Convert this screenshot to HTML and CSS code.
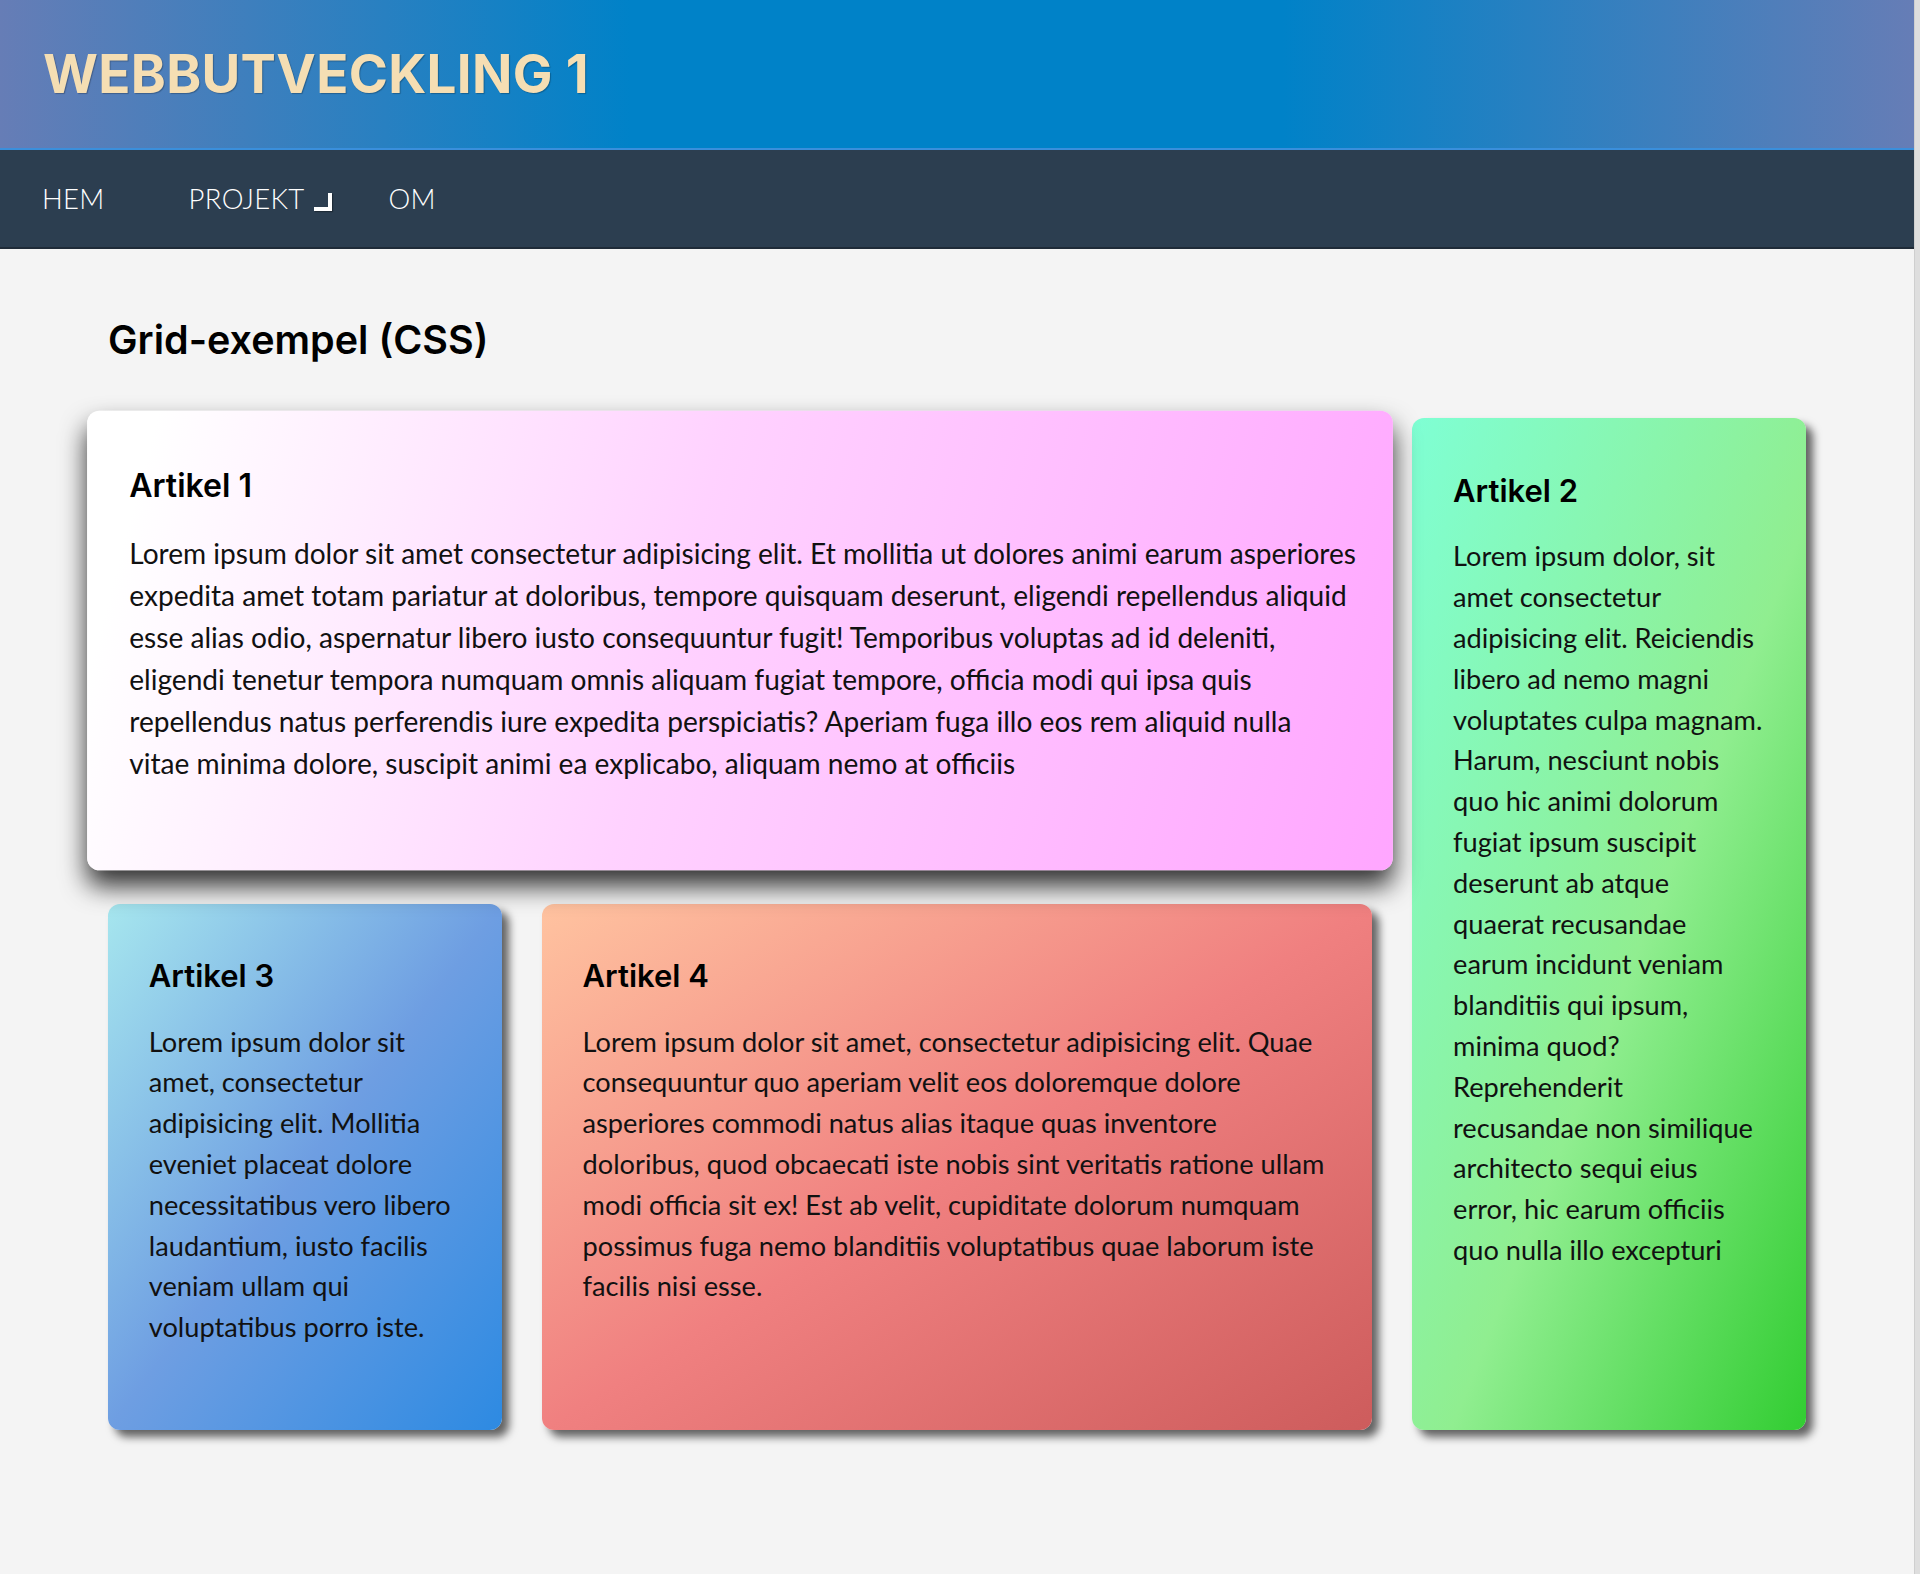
FILE: index.html
```html
<!DOCTYPE html>
<html lang="sv">
<head>
<meta charset="utf-8">
<title>Webbutveckling 1 – Grid-exempel</title>
<link rel="stylesheet" href="styles.css">
</head>
<body>
<div class="page">
  <header class="site-header">
    <h1 class="site-title">WEBBUTVECKLING 1</h1>
  </header>
  <nav class="site-nav">
    <ul class="nav-list">
      <li class="nav-item"><a class="nav-link" href="#">HEM</a></li>
      <li class="nav-item"><a class="nav-link nav-link--sub" href="#">PROJEKT</a></li>
      <li class="nav-item"><a class="nav-link" href="#">OM</a></li>
    </ul>
  </nav>
  <main class="content">
    <h2 class="page-title">Grid-exempel (CSS)</h2>
    <div class="grid">
      <article class="card card-1 card--lifted">
        <h3 class="card-title">Artikel 1</h3>
        <p class="card-text">Lorem ipsum dolor sit amet consectetur adipisicing elit. Et mollitia ut dolores animi earum asperiores expedita amet totam pariatur at doloribus, tempore quisquam deserunt, eligendi repellendus aliquid esse alias odio, aspernatur libero iusto consequuntur fugit! Temporibus voluptas ad id deleniti, eligendi tenetur tempora numquam omnis aliquam fugiat tempore, officia modi qui ipsa quis repellendus natus perferendis iure expedita perspiciatis? Aperiam fuga illo eos rem aliquid nulla vitae minima dolore, suscipit animi ea explicabo, aliquam nemo at officiis</p>
      </article>
      <article class="card card-2">
        <h3 class="card-title">Artikel 2</h3>
        <p class="card-text">Lorem ipsum dolor, sit amet consectetur adipisicing elit. Reiciendis libero ad nemo magni voluptates culpa magnam. Harum, nesciunt nobis quo hic animi dolorum fugiat ipsum suscipit deserunt ab atque quaerat recusandae earum incidunt veniam blanditiis qui ipsum, minima quod? Reprehenderit recusandae non similique architecto sequi eius error, hic earum officiis quo nulla illo excepturi</p>
      </article>
      <article class="card card-3">
        <h3 class="card-title">Artikel 3</h3>
        <p class="card-text">Lorem ipsum dolor sit amet, consectetur adipisicing elit. Mollitia eveniet placeat dolore necessitatibus vero libero laudantium, iusto facilis veniam ullam qui voluptatibus porro iste.</p>
      </article>
      <article class="card card-4">
        <h3 class="card-title">Artikel 4</h3>
        <p class="card-text">Lorem ipsum dolor sit amet, consectetur adipisicing elit. Quae consequuntur quo aperiam velit eos doloremque dolore asperiores commodi natus alias itaque quas inventore doloribus, quod obcaecati iste nobis sint veritatis ratione ullam modi officia sit ex! Est ab velit, cupiditate dolorum numquam possimus fuga nemo blanditiis voluptatibus quae laborum iste facilis nisi esse.</p>
      </article>
    </div>
  </main>
</div>
</body>
</html>
```

FILE: styles.css
```css
html {
  background: #dedede;
}

body {
  margin: 0;
  font-family: "Lato", "Open Sans", sans-serif;
  color: #111;
}

.page {
  margin-right: 5px;
  min-height: 100vh;
  background: #f4f4f4;
  border-right: 1px solid #cfcfcf;
}

.site-header {
  height: 148px;
  display: flex;
  align-items: center;
  padding: 0 43px;
  background: linear-gradient(to right, #667db6, #0082c8 33%, #0082c8 67%, #667db6);
  border-bottom: 2px solid #3a8fdc;
}

.site-title {
  margin: 0;
  font-family: "Inter", "Open Sans", sans-serif;
  font-weight: 700;
  font-size: 53px;
  line-height: 1;
  letter-spacing: 0.3px;
  color: #f5deb3;
  text-shadow: 1px 1px 1px rgba(0, 0, 0, 0.25);
}

.site-nav {
  height: 97px;
  display: flex;
  align-items: center;
  background: #2c3e50;
  border-bottom: 2px solid #1f2b38;
}

.nav-list {
  display: flex;
  margin: 0;
  padding: 0;
  list-style: none;
}

.nav-link {
  position: relative;
  display: block;
  padding: 0 42px;
  font-family: "Lato", sans-serif;
  font-weight: 300;
  font-size: 27.5px;
  letter-spacing: 0.3px;
  color: #fff;
  text-decoration: none;
}

.nav-link--sub::after {
  content: "";
  position: absolute;
  right: 14px;
  bottom: 4px;
  width: 14px;
  height: 14px;
  border-right: 4px solid #fff;
  border-bottom: 4px solid #fff;
  box-shadow: 1px 1px 1px rgba(0, 0, 0, 0.3);
}

.content {
  padding: 67.5px 108px 140px;
}

.page-title {
  margin: 0 0 54.5px;
  font-family: "Inter", "Open Sans", sans-serif;
  font-weight: 600;
  font-size: 39.5px;
  line-height: 1.2;
  color: #000;
}

.grid {
  display: grid;
  grid-template-columns: minmax(0, 394fr) minmax(0, 831fr) minmax(0, 394fr);
  gap: 40px;
}

.card {
  padding: 40.8px;
  border-radius: 12px;
  font-size: 27.2px;
  box-shadow: 7px 7px 9px rgba(0, 0, 0, 0.6);
}

.card-title {
  margin: 12px 0 0;
  font-family: "Inter", "Open Sans", sans-serif;
  font-weight: 600;
  font-size: 31px;
  line-height: 1.3;
  color: #000;
}

.card-text {
  margin: 25px 0 41.5px;
  line-height: 1.5;
}

.card-1 {
  grid-column: 1 / 3;
  grid-row: 1;
  padding-right: 35.8px;
  background: linear-gradient(105deg, #ffffff 5%, #ffd2ff 45%, #ffa6ff 100%);
}

.card-2 {
  grid-column: 3;
  grid-row: 1 / 3;
  background: linear-gradient(to bottom right, #7fffd4 0%, #90ee90 55%, #32cd32 100%);
}

.card-3 {
  grid-column: 1;
  grid-row: 2;
  background: linear-gradient(to bottom right, #a6e6ee 0%, #6e9ee2 50%, #2d8ae2 100%);
}

.card-4 {
  grid-column: 2;
  grid-row: 2;
  background: linear-gradient(to bottom right, #ffc3a0 0%, #f08080 50%, #cd5c5c 100%);
}

.card--lifted {
  position: relative;
  z-index: 1;
  transform: scale(1.033);
  box-shadow: 0 15px 25px rgba(0, 0, 0, 0.8);
}
```
